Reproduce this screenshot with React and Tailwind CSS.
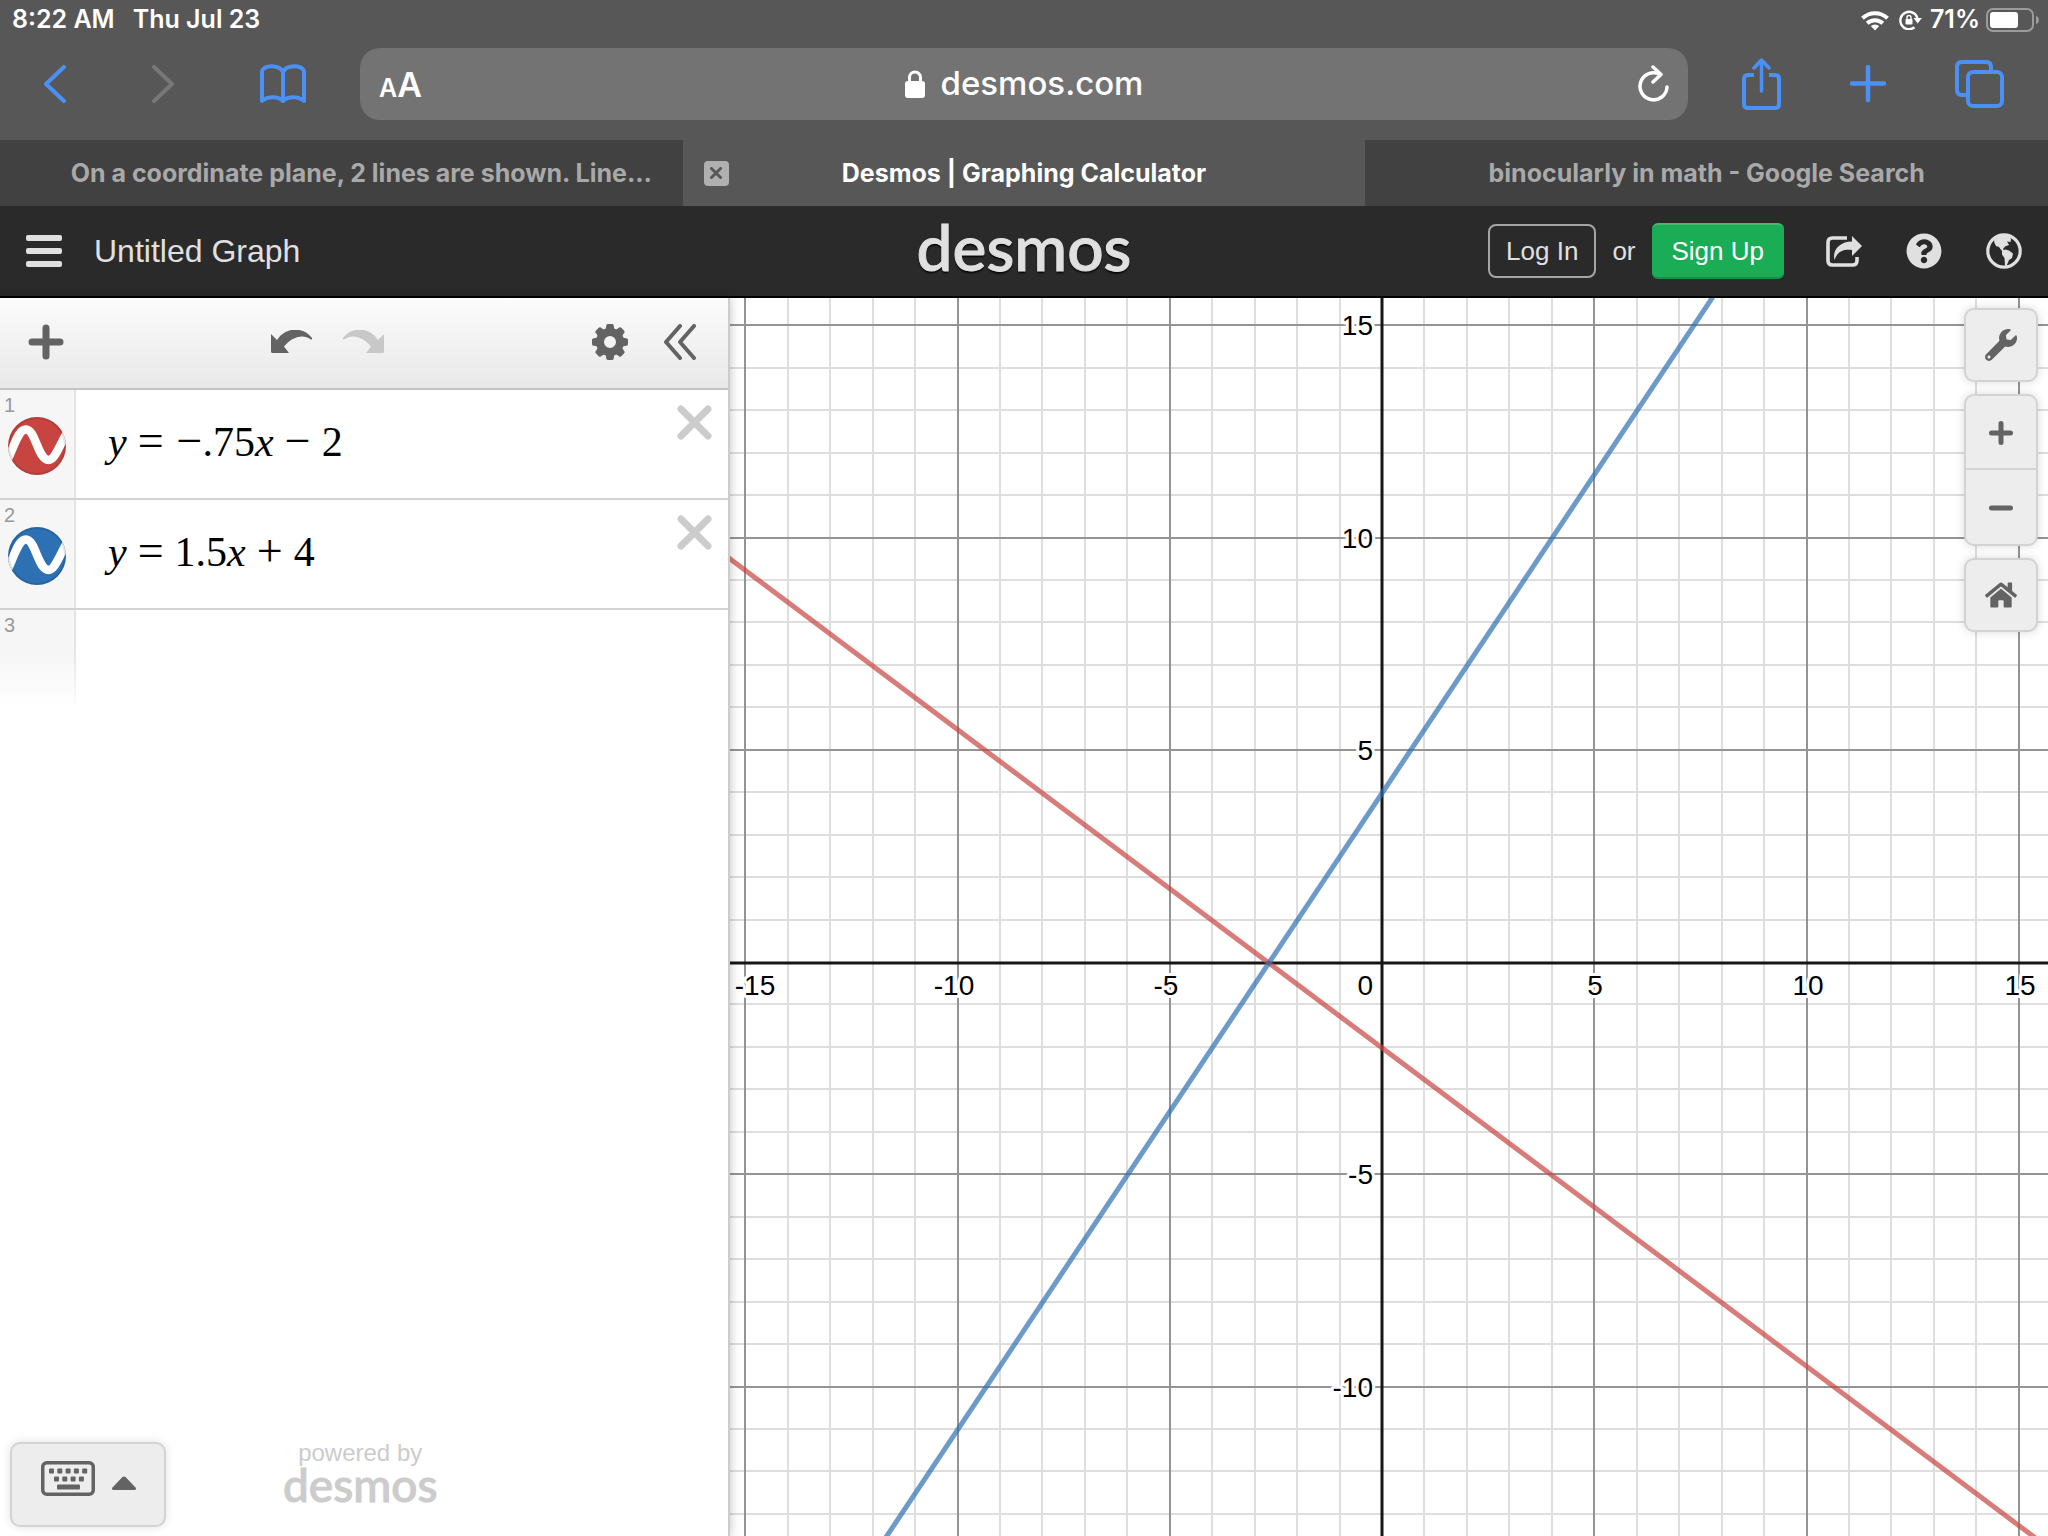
import { useState } from "react";
import { FaHome, FaQuestionCircle, FaWrench } from "react-icons/fa";

const UNIT = 42.45;
const ORIGIN = { x: 652, y: 665 };

const toX = (n) => Math.round(ORIGIN.x + n * UNIT);
const toY = (n) => Math.round(ORIGIN.y - 1 - n * UNIT);

const tabs = [
  { id: 1, title: "On a coordinate plane, 2 lines are shown. Line..." },
  { id: 2, title: "Desmos | Graphing Calculator" },
  { id: 3, title: "binocularly in math - Google Search" },
];

const expressions = [
  { id: 1, color: "#c74440", slope: -0.75, intercept: -2 },
  { id: 2, color: "#2d70b3", slope: 1.5, intercept: 4 },
];

const StatusBar = () => (
  <div className="flex h-10 items-center justify-between pl-3 pr-2 text-[25px] font-semibold text-white">
    <div className="flex gap-[18px]">
      <span>8:22 AM</span>
      <span>Thu Jul 23</span>
    </div>
    <div className="flex items-center">
      <svg viewBox="0 0 28 21" className="w-7" fill="none" stroke="#fff" strokeWidth="4">
        <path d="M1.5 8.2a18 18 0 0 1 25 0" />
        <path d="M6.2 13.2a11.5 11.5 0 0 1 15.6 0" />
        <path d="M14 20.5l-4.2-4.4a6.2 6.2 0 0 1 8.4 0z" fill="#fff" stroke="none" />
      </svg>
      <svg viewBox="0 0 23 20" className="ml-[10px] w-[23px]" fill="none">
        <path d="M15.5 17.3A8.7 8.7 0 1 1 18.4 8" stroke="#fff" strokeWidth="2.4" />
        <path d="M14.5 8h8.5l-4.4 5.5z" fill="#fff" />
        <rect x="6.5" y="9" width="7" height="5.5" rx="1" fill="#fff" />
        <path d="M8 9V7.5a2 2 0 0 1 4 0V9" stroke="#fff" strokeWidth="1.4" />
      </svg>
      <span className="ml-2">71%</span>
      <svg viewBox="0 0 54 24" className="ml-[6px] w-[54px]">
        <rect x="1" y="1" width="46" height="22" rx="6" fill="none" stroke="#9b9b9b" strokeWidth="2" />
        <rect x="4" y="4" width="28" height="16" rx="3" fill="#fff" />
        <path d="M50 8c4 1 4 7 0 8z" fill="#9b9b9b" />
      </svg>
    </div>
  </div>
);

const BrowserBar = () => (
  <div className="flex h-25 items-start px-11 pt-2">
    <div className="flex h-18 items-center gap-[86px] text-[#4a90f5]">
      <button aria-label="Back">
        <svg viewBox="0 0 22 38" className="w-[22px]" fill="none" stroke="currentColor" strokeWidth="4" strokeLinecap="round" strokeLinejoin="round">
          <path d="M20 2L2 19l18 17" />
        </svg>
      </button>
      <button aria-label="Forward" className="text-[#777777]" disabled>
        <svg viewBox="0 0 22 38" className="w-[22px]" fill="none" stroke="currentColor" strokeWidth="4" strokeLinecap="round" strokeLinejoin="round">
          <path d="M2 2l18 17L2 36" />
        </svg>
      </button>
      <button aria-label="Bookmarks">
        <svg viewBox="0 0 46 40" className="w-[46px]" fill="none" stroke="currentColor" strokeWidth="4" strokeLinejoin="round">
          <path d="M23 37V8C20 1 5 0 2 7v30c6-5 16-5 21 0zM23 37V8C26 1 41 0 44 7v30c-6-5-16-5-21 0z" />
        </svg>
      </button>
    </div>
    <div className="mx-[54px] flex h-18 min-w-0 flex-1 items-center justify-between rounded-[20px] bg-[#737373] pl-[19px] pr-[19px] text-white">
      <button aria-label="Text size" className="flex w-12 items-baseline font-semibold">
        <span className="text-[25px]">A</span>
        <span className="text-[34px]">A</span>
      </button>
      <div className="flex items-center gap-4">
        <svg viewBox="0 0 20 28" className="w-5" fill="none">
          <rect y="11" width="20" height="17" rx="3" fill="#fff" />
          <path d="M4.5 12V7.500a5.500 5.500 0 0 1 11 0V12" stroke="#fff" strokeWidth="3" />
        </svg>
        <span className="text-[33px] font-medium">desmos.com</span>
      </div>
      <button aria-label="Reload" className="flex w-12 justify-end">
        <svg viewBox="0 0 31 38" className="w-[31px]" fill="none" stroke="currentColor" strokeWidth="3.500" strokeLinecap="round" strokeLinejoin="round">
          <path d="M22 9.500A13.500 13.500 0 1 0 29 22" />
          <path d="M15 2l8 7.500-8 7.500" />
        </svg>
      </button>
    </div>
    <div className="flex h-18 items-center gap-[69px] text-[#4a90f5]">
      <button aria-label="Share">
        <svg viewBox="0 0 39 52" className="w-[39px]" fill="none" stroke="currentColor" strokeWidth="4" strokeLinecap="round" strokeLinejoin="round">
          <path d="M12 17H6q-4 0-4 4v25q0 4 4 4h27q4 0 4-4V21q0-4-4-4h-6" strokeLinecap="butt" />
          <path d="M19.500 33V3M12 10l7.500-8 7.500 8" strokeWidth="3.500" />
        </svg>
      </button>
      <button aria-label="New tab">
        <svg viewBox="0 0 36 38" className="w-9" fill="none" stroke="currentColor" strokeWidth="4.500" strokeLinecap="round">
          <path d="M18 2v33M2 18.500h32" />
        </svg>
      </button>
      <button aria-label="Show tabs">
        <svg viewBox="0 0 49 48" className="w-[49px]" fill="none" stroke="currentColor" strokeWidth="4">
          <path d="M12 35H7q-5 0-5-5V7q0-5 5-5h24q5 0 5 5v5" />
          <rect x="13" y="12" width="34" height="34" rx="5" />
        </svg>
      </button>
    </div>
  </div>
);

const TabStrip = ({ active, onSelect }) => (
  <div className="grid h-[66px] grid-cols-3 text-[25px] font-bold">
    {tabs.map((tab) => (
      <div
        key={tab.id}
        className={
          tab.id === active
            ? "relative flex min-w-0 items-center bg-[#575757] text-white"
            : "relative flex min-w-0 items-center bg-[#414141] text-[#a9a9a9]"
        }
      >
        {tab.id === active && (
          <button
            aria-label="Close tab"
            className="absolute left-[21px] flex size-[25px] items-center justify-center rounded bg-[#b0b0b0]"
          >
            <svg viewBox="0 0 12 12" className="w-3" stroke="#575757" strokeWidth="3" strokeLinecap="round">
              <path d="M1.500 1.500l9 9M10.500 1.500l-9 9" />
            </svg>
          </button>
        )}
        <button
          onClick={() => onSelect(tab.id)}
          className={
            tab.id === 1
              ? "w-full whitespace-nowrap pl-10 pt-[2px] text-center"
              : "w-full whitespace-nowrap pt-[2px] text-center"
          }
        >
          {tab.title}
        </button>
      </div>
    ))}
  </div>
);

const Header = () => (
  <header className="grid h-[92px] grid-cols-[1fr_auto_1fr] items-center border-b-2 border-black bg-[#2a2a2a] px-[26px] font-['Liberation_Sans',sans-serif] text-[#e0e0e0]">
    <div className="flex items-center gap-8">
      <button aria-label="Menu" className="flex w-9 flex-col gap-[7px]">
        <span className="h-[6px] rounded-xs bg-[#e0e0e0]" />
        <span className="h-[6px] rounded-xs bg-[#e0e0e0]" />
        <span className="h-[6px] rounded-xs bg-[#e0e0e0]" />
      </button>
      <h1 className="text-[32px]">Untitled Graph</h1>
    </div>
    <a
      href="#"
      className="pb-2 font-['Lato',sans-serif] text-[64px] leading-[72px] font-medium [-webkit-text-stroke:1px_#e0e0e0] [text-shadow:0_2px_2px_#000]"
    >
      desmos
    </a>
    <div className="flex items-center justify-end text-[26px]">
      <button className="h-[54px] rounded-lg border-2 border-[#a5a5a5] px-4">Log In</button>
      <span className="mx-4">or</span>
      <button className="h-14 rounded-md border-y-2 border-t-[#45b871] border-b-[#178f47] bg-[#1bad55] px-5 text-white">
        Sign Up
      </button>
      <button aria-label="Share graph" className="ml-[42px]">
        <svg viewBox="0 0 36 31" className="w-9">
          <path d="M21 2H6.500Q2 2 2 6.500v18Q2 29 6.500 29h20q4.500 0 4.500-4.500V21" fill="none" stroke="currentColor" strokeWidth="3.600" />
          <path d="M26 0l10 10-10 10v-6C17 13 11 16 8.500 24 6 14 14 5.500 26 5.500z" fill="currentColor" />
        </svg>
      </button>
      <button aria-label="Help" className="ml-11">
        <FaQuestionCircle className="size-9" />
      </button>
      <button aria-label="Language" className="ml-11">
        <svg viewBox="0 0 36 36" className="w-9">
          <circle cx="18" cy="18" r="16.200" fill="none" stroke="currentColor" strokeWidth="3.200" />
          <path d="M8 7l6-4.500h9l2 3.500-.5 3-3.500-.5 2 3.500-4 1.500-2 2.500 1.500 2.500-2.500-.5-3-4-3-1-1.500-3z" fill="currentColor" />
          <path d="M16 18l3-1.500 4 1 4 3-1 4.500-3 2-2.500 6-1.500-.5-.5-7.500-2.500-3.500z" fill="currentColor" />
        </svg>
      </button>
    </div>
  </header>
);

const Gear = () => (
  <svg viewBox="0 0 36 36" className="w-9">
    <circle cx="18" cy="18" r="10" fill="none" stroke="currentColor" strokeWidth="8" />
    {[0, 45, 90, 135, 180, 225, 270, 315].map((angle) => (
      <path
        key={angle}
        d="M13.500 6L14.500.800Q15 0 16 0h4q1 0 1.500.8L22.500 6z"
        fill="currentColor"
        transform={`rotate(${angle} 18 18)`}
      />
    ))}
  </svg>
);

const CurveArrow = () => (
  <svg viewBox="0 0 41 23" className="w-[41px]" fill="currentColor">
    <path d="M0 4v17.500Q0 23 1.500 23H18l-5-6.500C20 8 31 3 40 9.500Q41.500 9.500 41 8C34-2 16-5 6 10z" />
  </svg>
);

const Toolbar = () => (
  <div className="flex h-[92px] items-center border-b-2 border-[#c4c4c4] bg-linear-to-b from-[#fcfcfc] to-[#e8e8e8] pb-[2px] pl-7 pr-[31px] text-[#636363]">
    <button aria-label="Add item">
      <svg viewBox="0 0 36 36" className="w-9" stroke="currentColor" strokeWidth="7" strokeLinecap="round">
        <path d="M18 4v28M4 18h28" />
      </svg>
    </button>
    <div className="flex flex-1 justify-center gap-[31px] pb-[2px] pr-[2px]">
      <button aria-label="Undo">
        <CurveArrow />
      </button>
      <button aria-label="Redo" className="-scale-x-100 text-[#c8c8c8]" disabled>
        <CurveArrow />
      </button>
    </div>
    <button aria-label="Edit list">
      <Gear />
    </button>
    <button aria-label="Hide list" className="ml-9">
      <svg viewBox="0 0 33 36" className="w-[33px]" fill="none" stroke="currentColor" strokeWidth="4" strokeLinecap="round" strokeLinejoin="round">
        <path d="M16 2L2 18l14 16M30 2L16 18l14 16" />
      </svg>
    </button>
  </div>
);

const Operator = ({ children }) => <span className="mx-[11px] text-[46px]">{children}</span>;

const ExpressionRow = ({ item, children, onRemove }) => (
  <li className="flex h-[110px] border-b-2 border-[#d3d3d3]">
    <div className="flex w-[76px] flex-col border-r-2 border-[#e4e4e4] bg-[#f6f6f6]">
      <span className="h-[27px] px-1 pt-px text-xl text-[#999999]">{item.id}</span>
      <button aria-label={`Toggle line ${item.id}`} className="ml-2 size-[58px]">
        <svg viewBox="0 0 58 58" className="w-full">
          <clipPath id={`disc-${item.id}`}>
            <circle cx="29" cy="29" r="29" />
          </clipPath>
          <g clipPath={`url(#disc-${item.id})`}>
            <rect width="58" height="58" fill={item.color} />
            <path
              d="M0 42C8 24 11 12.500 18 12.500 27.500 12.500 30 43 40.500 43 47 43 51 29 60 14"
              fill="none"
              stroke="#fff"
              strokeWidth="8.500"
            />
          </g>
          <circle cx="29" cy="29" r="28" fill="none" stroke="#000" strokeOpacity="0.1" strokeWidth="2" />
        </svg>
      </button>
    </div>
    <div className="flex-1 pl-8 pt-[25px] font-['Liberation_Serif',serif] text-[42px] leading-[52px] text-black">
      {children}
    </div>
    <button aria-label={`Delete line ${item.id}`} onClick={onRemove} className="mr-4 mt-[15px] size-[35px]">
      <svg viewBox="0 0 35 35" className="w-full" stroke="#cccccc" strokeWidth="7" strokeLinecap="round">
        <path d="M4 4l27 27M31 4L4 31" />
      </svg>
    </button>
  </li>
);

const ExpressionPanel = ({ items, onRemove }) => (
  <aside className="relative z-10 flex w-[730px] shrink-0 flex-col border-r-2 border-[#cccccc] bg-white font-['Liberation_Sans',sans-serif] shadow-[0_0_10px_rgba(0,0,0,0.25)]">
    <Toolbar />
    <ol>
      {items.map((item) => (
        <ExpressionRow key={item.id} item={item} onRemove={() => onRemove(item.id)}>
          {item.id === 1 ? (
            <>
              <i>y</i>
              <Operator>=</Operator>
              <span className="ml-[2px] text-[46px]">−</span>.75<i>x</i>
              <Operator>−</Operator>2
            </>
          ) : (
            <>
              <i>y</i>
              <Operator>=</Operator>1.5<i>x</i>
              <Operator>+</Operator>4
            </>
          )}
        </ExpressionRow>
      ))}
      <li className="h-25">
        <div className="h-full w-[76px] bg-linear-to-b from-[#e4e4e4] from-40% to-white pr-[2px]">
          <div className="h-full bg-linear-to-b from-[#f6f6f6] from-40% to-white px-1 pt-px text-xl text-[#999999]">
            3
          </div>
        </div>
      </li>
    </ol>
    <div className="mt-auto flex items-end pb-[9px] pl-[10px]">
      <button
        aria-label="Show keypad"
        className="flex h-[85px] w-[156px] items-center gap-[17px] rounded-[10px] border-2 border-[#d3d3d3] bg-[#ededed] pb-3 pl-[29px] text-[#636363] shadow-[0_0_10px_rgba(0,0,0,0.12)]"
      >
        <svg viewBox="0 0 54 35" className="w-[54px]" fill="currentColor">
          <rect x="1.750" y="1.750" width="50.500" height="31.500" rx="4" fill="none" stroke="currentColor" strokeWidth="3.500" />
          {[8, 16.300, 24.600, 32.900, 41.200].map((x) => (
            <rect key={x} x={x} y="7.500" width="5" height="5" rx="1" />
          ))}
          {[13, 21.300, 29.600, 37.900].map((x) => (
            <rect key={x} x={x} y="15.500" width="5" height="5" rx="1" />
          ))}
          <rect x="16" y="23.500" width="23" height="5" rx="1" />
        </svg>
        <svg viewBox="0 0 24 14" className="mt-2 w-6" fill="currentColor">
          <path d="M10.500 1Q12 0 13.500 1L24 12q0 2-1 2H1q-1 0-1-2z" />
        </svg>
      </button>
      <div className="ml-[117px] flex flex-col items-center pb-[22px] text-[#cccccc]">
        <span className="text-2xl leading-6">powered by</span>
        <span className="font-['Lato',sans-serif] text-[46px] leading-10 font-medium [-webkit-text-stroke:1px_#cccccc]">
          desmos
        </span>
      </div>
    </div>
  </aside>
);

const GraphPaper = ({ items }) => {
  const columns = Array.from({ length: 31 }, (_, i) => i - 15);
  const rows = Array.from({ length: 29 }, (_, i) => i - 13);
  const minor = (n) => n % 5 !== 0;
  const major = (n) => n % 5 === 0 && n !== 0;

  const renderLines = (test, stroke) => (
    <g stroke={stroke} strokeWidth="2">
      {columns.filter(test).map((n) => (
        <line key={`x${n}`} x1={toX(n)} x2={toX(n)} y1="-400" y2="1700" />
      ))}
      {rows.filter(test).map((n) => (
        <line key={`y${n}`} x1="-400" x2="1800" y1={toY(n)} y2={toY(n)} />
      ))}
    </g>
  );

  return (
    <svg viewBox="0 0 1318 1238" preserveAspectRatio="xMidYMid slice" className="size-full bg-white">
      {renderLines(minor, "#dedede")}
      {renderLines(major, "#949494")}
      <g stroke="#161616" strokeWidth="3">
        <line x1={ORIGIN.x} x2={ORIGIN.x} y1="-400" y2="1700" />
        <line x1="-400" x2="1800" y1={ORIGIN.y} y2={ORIGIN.y} />
      </g>
      <g
        className="font-['Liberation_Sans',sans-serif] text-[28px]"
        fill="#000"
        stroke="#fff"
        strokeWidth="6"
        strokeLinejoin="round"
        paintOrder="stroke"
      >
        {[-15, -10, -5, 5, 10, 15].map((n) => (
          <text
            key={n}
            x={n === -15 ? 25 : n < 0 ? toX(n) - 4 : toX(n) + 1}
            y={ORIGIN.y + 32}
            textAnchor="middle"
          >
            {n}
          </text>
        ))}
        {[15, 10, 5, -5, -10].map((n) => (
          <text key={n} x={ORIGIN.x - 9} y={toY(n) + 10} textAnchor="end">
            {n}
          </text>
        ))}
        <text x={ORIGIN.x - 9} y={ORIGIN.y + 32} textAnchor="end">
          0
        </text>
      </g>
      {items.map(({ id, color, slope, intercept }) => (
        <line
          key={id}
          x1={ORIGIN.x - 20 * UNIT}
          y1={ORIGIN.y - (slope * -20 + intercept) * UNIT}
          x2={ORIGIN.x + 20 * UNIT}
          y2={ORIGIN.y - (slope * 20 + intercept) * UNIT}
          stroke={color}
          strokeOpacity="0.7"
          strokeWidth="5"
        />
      ))}
    </svg>
  );
};

const GraphControls = () => (
  <div className="absolute right-[10px] top-[10px] flex w-[74px] flex-col gap-3 text-[#636363]">
    <button
      aria-label="Graph settings"
      className="flex h-[74px] items-center justify-center rounded-[10px] border-2 border-[#d3d3d3] bg-[#ededed] shadow-[0_0_10px_rgba(0,0,0,0.15)]"
    >
      <FaWrench className="size-8" />
    </button>
    <div className="flex flex-col rounded-[10px] border-2 border-[#d3d3d3] bg-[#ededed] shadow-[0_0_10px_rgba(0,0,0,0.15)]">
      <button aria-label="Zoom in" className="flex h-[74px] items-center justify-center border-b-2 border-[#d3d3d3] pt-[2px]">
        <svg viewBox="0 0 24 24" className="w-6" stroke="currentColor" strokeWidth="5" strokeLinecap="round">
          <path d="M12 2.500v19M2.500 12h19" />
        </svg>
      </button>
      <button aria-label="Zoom out" className="flex h-[74px] items-center justify-center pt-[2px]">
        <svg viewBox="0 0 24 24" className="w-6" stroke="currentColor" strokeWidth="5" strokeLinecap="round">
          <path d="M2.500 12h19" />
        </svg>
      </button>
    </div>
    <button
      aria-label="Default viewport"
      className="flex h-[74px] items-center justify-center rounded-[10px] border-2 border-[#d3d3d3] bg-[#ededed] shadow-[0_0_10px_rgba(0,0,0,0.15)]"
    >
      <FaHome className="size-8" />
    </button>
  </div>
);

const App = () => {
  const [activeTab, setActiveTab] = useState(2);
  const [items, setItems] = useState(expressions);

  const removeItem = (id) => {
    setItems((prev) => prev.filter((item) => item.id !== id));
  };

  return (
    <div className="flex h-screen flex-col overflow-hidden bg-[#575757] font-['Inter',sans-serif]">
      <StatusBar />
      <BrowserBar />
      <TabStrip active={activeTab} onSelect={setActiveTab} />
      <Header />
      <main className="flex min-h-0 flex-1">
        <ExpressionPanel items={items} onRemove={removeItem} />
        <section className="relative min-w-0 flex-1">
          <GraphPaper items={items} />
          <GraphControls />
        </section>
      </main>
    </div>
  );
};

export default App;
